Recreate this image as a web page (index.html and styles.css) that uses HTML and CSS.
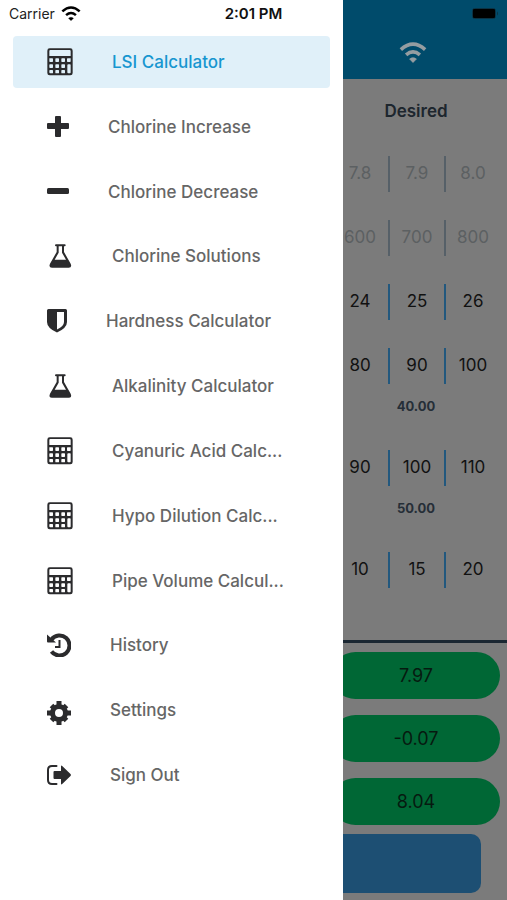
FILE: index.html
```html
<!DOCTYPE html>
<html lang="en">
<head>
<meta charset="utf-8">
<meta name="viewport" content="width=device-width, initial-scale=1">
<title>LSI Calculator</title>
<link rel="stylesheet" href="styles.css">
</head>
<body>
<svg class="sprite" aria-hidden="true">
  <symbol id="calc" viewBox="0 0 78 84">
    <path fill-rule="evenodd" d="M8 1H70Q77 1 77 8V75Q77 82 70 82H8Q1 82 1 75V8Q1 1 8 1ZM10 6Q7 6 7 9V24H71V9Q71 6 68 6ZM7 31h9q2 0 2 2v7q0 2-2 2H9q-2 0-2-2ZM27 31h7q2 0 2 2v7q0 2-2 2h-7q-2 0-2-2v-7q0-2 2-2ZM45 31h7q2 0 2 2v7q0 2-2 2h-7q-2 0-2-2v-7q0-2 2-2ZM62 31h9v9q0 2-2 2h-7q-2 0-2-2v-7q0-2 2-2ZM9 49h7q2 0 2 2v7q0 2-2 2H9q-2 0-2-2v-7q0-2 2-2ZM27 49h7q2 0 2 2v7q0 2-2 2h-7q-2 0-2-2v-7q0-2 2-2ZM45 49h7q2 0 2 2v7q0 2-2 2h-7q-2 0-2-2v-7q0-2 2-2ZM64 49h5q2 0 2 2v22q0 3-2 3h-5q-3 0-3-3V52q0-3 3-3ZM9 66h7q2 0 2 2v6q0 2-2 2h-6q-3 0-3-3v-5q0-2 2-2ZM27 66h7q2 0 2 2v6q0 2-2 2h-7q-2 0-2-2v-6q0-2 2-2ZM45 66h7q2 0 2 2v6q0 2-2 2h-7q-2 0-2-2v-6q0-2 2-2Z"/>
  </symbol>
  <symbol id="flask" viewBox="0 0 78 72">
    <path fill-rule="evenodd" d="M27 1H53Q56 1 56 4T53 7H51V24L71 59Q76 71 65 71H15Q4 71 9 59L29 24V7H27Q24 7 24 4T27 1ZM35 7V26L23 47H57L45 26V7Z"/>
  </symbol>
  <symbol id="wifi" viewBox="0 0 84 64">
    <path class="wave" d="M5 23Q42-10 79 23M21 39Q42 21 63 39"/>
    <path d="M31 52Q42 43 53 52L42 63Z"/>
  </symbol>
</svg>

<div class="app">
  <div class="status">
    <span class="carrier">Carrier <svg width="20" height="15"><use href="#wifi"/></svg></span>
    <span class="time">2:01 PM</span>
    <span class="power"><svg width="26" height="12" viewBox="0 0 26 12"><rect class="shell" x="0.500" y="0.500" width="23" height="10" rx="2"/><rect x="1" y="1" width="22" height="9" rx="1"/><path class="tip" d="M25 3.500v4q1-.5 1-2t-1-2"/></svg></span>
  </div>

  <nav class="drawer" aria-label="Main">
    <ul class="menu">
      <li><a class="item active" href="#lsi" aria-current="page"><svg width="26" height="28"><use href="#calc"/></svg>LSI Calculator</a></li>
      <li><a class="item" href="#increase"><svg width="22" height="24" viewBox="0 0 22 24"><path d="M9 1h4q1 0 1 1v6h7q1 0 1 1v4q0 1-1 1h-7v7q0 1-1 1H9q-1 0-1-1v-7H1q-1 0-1-1V9q0-1 1-1h7V2q0-1 1-1Z"/></svg>Chlorine Increase</a></li>
      <li><a class="item" href="#decrease"><svg width="22" height="24" viewBox="0 0 22 24"><rect y="8" width="22" height="6" rx="1.500"/></svg>Chlorine Decrease</a></li>
      <li><a class="item" href="#solutions"><svg width="26" height="24"><use href="#flask"/></svg>Chlorine Solutions</a></li>
      <li><a class="item" href="#hardness"><svg width="20" height="24" viewBox="0 0 20 24"><path fill-rule="evenodd" d="M1.500 0h17Q20 0 20 1.500V13q0 6-10 10.500Q0 19 0 13V1.500Q0 0 1.500 0ZM10 3v17.500q7-3.500 7-7.500V3Z"/></svg>Hardness Calculator</a></li>
      <li><a class="item" href="#alkalinity"><svg width="26" height="24"><use href="#flask"/></svg>Alkalinity Calculator</a></li>
      <li><a class="item" href="#cyanuric"><svg width="26" height="28"><use href="#calc"/></svg>Cyanuric Acid Calc...</a></li>
      <li><a class="item" href="#hypo"><svg width="26" height="28"><use href="#calc"/></svg>Hypo Dilution Calc...</a></li>
      <li><a class="item" href="#pipe"><svg width="26" height="28"><use href="#calc"/></svg>Pipe Volume Calcul...</a></li>
      <li><a class="item" href="#history"><svg width="24" height="24" viewBox="0 0 24 24"><path class="line thick" d="M4.500 6.500A10 10 0 1 1 4.500 18.500"/><path d="M0 1.500 9 9.500H1Q0 9.500 0 8.500Z"/><path class="line thin" d="M12.500 7v7H8"/></svg>History</a></li>
      <li><a class="item" href="#settings"><svg width="24" height="30" viewBox="0 0 24 30"><g class="line cog"><circle cx="12" cy="18" r="6.500"/><path d="M12 6v5M12 25v5M0 18h5M19 18h5M4.500 10.500l3 3M16.500 22.500l3 3M19.500 10.500l-3 3M7.500 22.500l-3 3"/></g></svg>Settings</a></li>
      <li><a class="item" href="#signout"><svg width="24" height="22" viewBox="0 0 24 22"><path class="line exit" d="M9.500 2H5Q1 2 1 6v10q0 4 4 4h4.500"/><path d="M6.500 8q0-1 1-1H14V2.500q0-1.500 1.200-.5l8.300 8.100q.8.900 0 1.800L15.200 20Q14 21 14 19.500V15H7.500q-1 0-1-1Z"/></svg>Sign Out</a></li>
    </ul>
  </nav>

  <main class="panel">
    <header class="top"><svg width="28" height="21"><use href="#wifi"/></svg></header>
    <section class="values">
      <h1>Desired</h1>
      <div class="picker off"><span>7.8</span><span>7.9</span><span>8.0</span></div>
      <div class="picker off"><span>600</span><span>700</span><span>800</span></div>
      <div class="picker"><span>24</span><span>25</span><span>26</span></div>
      <div class="picker"><span>80</span><span>90</span><span>100</span></div>
      <p class="note">40.00</p>
      <div class="picker"><span>90</span><span>100</span><span>110</span></div>
      <p class="note">50.00</p>
      <div class="picker"><span>10</span><span>15</span><span>20</span></div>
    </section>
    <section class="results">
      <output>7.97</output>
      <output>-0.07</output>
      <output>8.04</output>
      <button class="action" type="button" aria-label="Save"></button>
    </section>
  </main>
</div>
</body>
</html>
```
FILE: styles.css
```css
* { box-sizing: border-box; }

body {
  margin: 0;
  background: #7b7b7b;
  font-family: Inter, "Liberation Sans", sans-serif;
}

.sprite { position: absolute; width: 0; height: 0; }

.app {
  position: relative;
  display: flex;
  min-height: 100vh;
}

/* Status bar floats over drawer and panel */
.status {
  position: absolute;
  top: 0;
  left: 0;
  right: 0;
  z-index: 2;
  display: grid;
  grid-template-columns: 1fr auto 1fr;
  align-items: center;
  height: 27px;
  padding: 0 9px;
  font-size: 14px;
  color: #111;
}
.carrier { display: flex; align-items: center; gap: 6px; color: #222; }
.carrier svg { fill: #000; stroke: #000; }
.time { font-size: 15px; font-weight: 600; }
.power { display: flex; justify-content: flex-end; }
.shell { fill: none; stroke: #0b3244; }
.tip { fill: #0b3244; }

.wave { fill: none; stroke-width: 11px; }

.drawer {
  display: flex;
  flex: 0 0 343px;
  padding: 36px 13px 99px;
  background: #fff;
}
.menu {
  display: flex;
  flex: 1;
  flex-direction: column;
  justify-content: space-between;
  margin: 0;
  padding: 0;
  list-style: none;
}
.item {
  display: flex;
  align-items: center;
  gap: 39px;
  height: 52px;
  padding-left: 34px;
  border-radius: 4px;
  color: #666;
  font-size: 17px;
  font-weight: 500;
  text-decoration: none;
  white-space: nowrap;
}
.item svg { flex: none; fill: #2b2b2d; }
.active { background: #e0f0f9; color: #1796d0; }

.line { fill: none; stroke: #2b2b2d; }
.thick { stroke-width: 4px; }
.thin { stroke-width: 2px; }
.exit { stroke-width: 2px; stroke-linecap: round; }
.cog { stroke-width: 5px; }

.panel {
  flex: 1;
  min-width: 0;
  overflow: hidden;
  background: #7b7b7b;
}
.top {
  display: flex;
  align-items: flex-end;
  justify-content: center;
  height: 79px;
  padding: 0 24px 16px 0;
  background: #004b6b;
}
.top svg { fill: #959da1; stroke: #959da1; }

.values, .results {
  margin-left: -11px;
  padding-right: 7px;
}
.values {
  height: 564px;
  padding-top: 20px;
  border-bottom: 3px solid #1b2732;
}
h1 {
  margin: 0 0 33px;
  color: #1d262e;
  font-size: 17px;
  font-weight: 600;
  line-height: 24px;
  text-align: center;
}
.picker {
  display: grid;
  grid-template-columns: repeat(3, 1fr);
  height: 36px;
  margin-bottom: 28px;
  color: #111;
  font-size: 17px;
  line-height: 34px;
  text-align: center;
}
.picker span { height: 36px; }
.picker span + span { border-left: 2px solid #22587e; }
.off { color: #5c6062; }
.off span + span { border-color: #566068; }
.note {
  margin: -16px 0 34px;
  color: #252e37;
  font-size: 13px;
  font-weight: 700;
  line-height: 20px;
  text-align: center;
}

.results {
  display: flex;
  flex-direction: column;
  gap: 16px;
  padding-top: 9px;
}
.results output {
  height: 47px;
  border-radius: 24px;
  background: #006735;
  color: #061a10;
  font-size: 18px;
  line-height: 47px;
  text-align: center;
}
.action {
  height: 59px;
  margin: -7px 19px 0 0;
  border: 0;
  border-radius: 10px;
  background: #1d4f73;
}
```
